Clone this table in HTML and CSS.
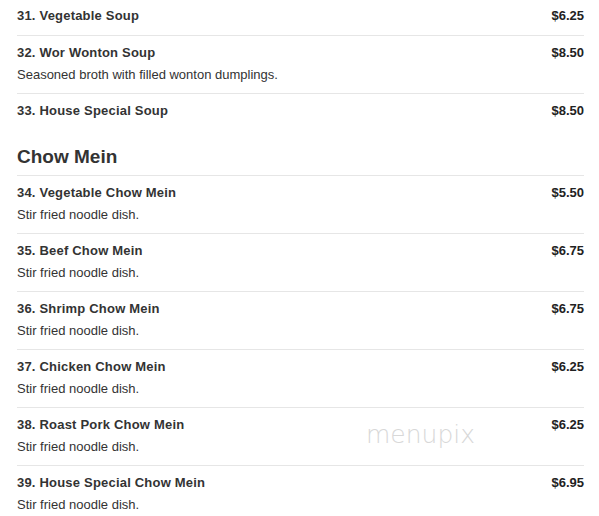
FILE: index.html
```html
<!DOCTYPE html>
<html>
<head>
<meta charset="utf-8">
<link rel="stylesheet" href="styles.css">
</head>
<body>
<div class="menu">
  <div class="item first">
    <div class="row"><span class="name">31. Vegetable Soup</span><span class="price">$6.25</span></div>
  </div>
  <div class="item">
    <div class="row"><span class="name">32. Wor Wonton Soup</span><span class="price">$8.50</span></div>
    <div class="desc">Seasoned broth with filled wonton dumplings.</div>
  </div>
  <div class="item">
    <div class="row"><span class="name">33. House Special Soup</span><span class="price">$8.50</span></div>
  </div>
  <h2 class="section">Chow Mein</h2>
  <div class="item">
    <div class="row"><span class="name">34. Vegetable Chow Mein</span><span class="price">$5.50</span></div>
    <div class="desc">Stir fried noodle dish.</div>
  </div>
  <div class="item">
    <div class="row"><span class="name">35. Beef Chow Mein</span><span class="price">$6.75</span></div>
    <div class="desc">Stir fried noodle dish.</div>
  </div>
  <div class="item">
    <div class="row"><span class="name">36. Shrimp Chow Mein</span><span class="price">$6.75</span></div>
    <div class="desc">Stir fried noodle dish.</div>
  </div>
  <div class="item">
    <div class="row"><span class="name">37. Chicken Chow Mein</span><span class="price">$6.25</span></div>
    <div class="desc">Stir fried noodle dish.</div>
  </div>
  <div class="item wm-host">
    <div class="row"><span class="name">38. Roast Pork Chow Mein</span><span class="price">$6.25</span></div>
    <div class="desc">Stir fried noodle dish.</div>
    <span class="watermark">menupix</span>
  </div>
  <div class="item">
    <div class="row"><span class="name">39. House Special Chow Mein</span><span class="price">$6.95</span></div>
    <div class="desc">Stir fried noodle dish.</div>
  </div>
</div>
</body>
</html>
```

FILE: styles.css
```css
html, body {
  margin: 0;
  padding: 0;
  background: #fff;
}
body {
  font-family: "Liberation Sans", Arial, sans-serif;
  color: #333;
}
.menu {
  margin-left: 17px;
  width: 567px;
}
.item {
  padding: 6px 0 9px;
  border-top: 1px solid #e6e6e6;
}
.item.first {
  border-top: none;
  padding-top: 5px;
  padding-bottom: 10px;
}
.row {
  display: flex;
  justify-content: space-between;
  align-items: center;
  height: 20px;
}
.name {
  font-size: 13px;
  font-weight: bold;
  letter-spacing: 0.2px;
}
.price {
  font-size: 13px;
  font-weight: bold;
  color: #222;
}
.desc {
  font-size: 13px;
  line-height: 20px;
  margin-top: 3px;
  margin-bottom: -1px;
}
.section {
  margin: 0;
  padding: 17px 0 7px;
  font-size: 19px;
  font-weight: bold;
  line-height: 22px;
  color: #333;
}
.wm-host {
  position: relative;
}
.watermark {
  position: absolute;
  left: 349px;
  top: 12px;
  font-family: "DejaVu Sans", sans-serif;
  font-weight: 200;
  font-size: 25px;
  line-height: 30px;
  color: #d8d8d8;
}
```
